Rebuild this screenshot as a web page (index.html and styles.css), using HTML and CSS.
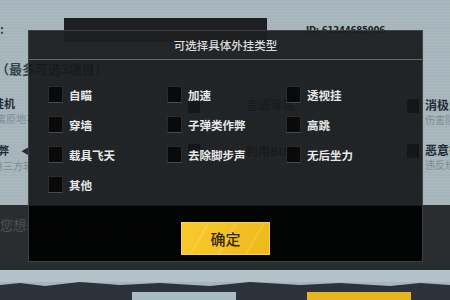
FILE: index.html
```html
<!DOCTYPE html>
<html lang="zh-CN">
  <head>
    <meta charset="UTF-8" />
    <meta name="viewport" content="width=device-width, initial-scale=1.0" />
    <title>举报</title>
    <link rel="stylesheet" href="styles.css">
  </head>
  <body>
    <div class="screen">
      <div class="report">
        <div class="report-head">
          <span class="colon">:</span>
          <div class="name-bar"></div>
          <span class="player-id">ID: 61244685906</span>
        </div>
        <div class="report-hint">（最多可选3项目）</div>
        <div class="reasons">
          <div class="reason-text">
            <div class="reason-name cut">消极挂机</div>
            <div class="reason-sub cut-sub">离原地不动</div>
          </div>
          <div class="reason">
            <span class="page-box"></span>
            <div class="reason-text">
              <div class="reason-name ghost">言语辱骂</div>
            </div>
          </div>
          <div class="reason">
            <span class="page-box"></span>
            <div class="reason-text">
              <div class="reason-name">消极比赛</div>
              <div class="reason-sub">伤害队友</div>
            </div>
          </div>
          <div class="reason-text row-2">
            <div class="reason-name cut-2">外挂作弊<span class="arrow">◀</span></div>
            <div class="reason-sub cut-sub-2">使用第三方软件</div>
          </div>
          <div class="reason row-2">
            <span class="page-box"></span>
            <div class="reason-text">
              <div class="reason-name ghost">利用BUG</div>
            </div>
          </div>
          <div class="reason">
            <span class="page-box"></span>
            <div class="reason-text">
              <div class="reason-name">恶意行为</div>
              <div class="reason-sub">违反规则</div>
            </div>
          </div>
        </div>
      </div>

      <div class="note">您想举报的详细情况（选填）</div>

      <div class="bottom">
        <div class="strip"></div>
        <div class="base">
          <span class="base-btn base-btn-grey"></span>
          <span class="base-btn base-btn-gold"></span>
        </div>
      </div>

      <div class="modal">
        <div class="modal-title">可选择具体外挂类型</div>
        <div class="modal-body">
          <label class="option"><span class="box"></span>自瞄</label>
          <label class="option"><span class="box"></span>加速</label>
          <label class="option"><span class="box"></span>透视挂</label>
          <label class="option"><span class="box"></span>穿墙</label>
          <label class="option"><span class="box"></span>子弹类作弊</label>
          <label class="option"><span class="box"></span>高跳</label>
          <label class="option"><span class="box"></span>载具飞天</label>
          <label class="option"><span class="box"></span>去除脚步声</label>
          <label class="option"><span class="box"></span>无后坐力</label>
          <label class="option"><span class="box"></span>其他</label>
        </div>
        <div class="modal-footer">
          <button class="confirm">确定</button>
        </div>
      </div>
    </div>
  </body>
</html>
```

FILE: styles.css
```css
body {
  margin: 0;
  padding: 0;
  font-family: "Noto Sans CJK SC", "Noto Sans", sans-serif;
  background-color: #a5b4ba;
}

.screen {
  position: relative;
  width: 450px;
  height: 300px;
  overflow: hidden;
  display: flex;
  flex-direction: column;
  background-color: #a6b5bb;
  background-image: repeating-linear-gradient(
    0deg,
    rgba(255, 255, 255, 0.05) 0 1px,
    transparent 1px 3px
  );
}

/* page behind the dialog */
.report {
  height: 205px;
  padding-top: 18px;
  box-sizing: border-box;
}

.report-head {
  display: flex;
  height: 24px;
}

.colon {
  width: 64px;
  font-size: 12px;
  line-height: 22px;
  color: #33414b;
  font-weight: bold;
}

.name-bar {
  width: 203px;
  background-color: #1c1e20;
}

.player-id {
  margin-left: 39px;
  margin-top: 6px;
  font-family: "DejaVu Sans Condensed", "DejaVu Sans", sans-serif;
  font-weight: bold;
  font-size: 9.5px;
  line-height: 11px;
  color: #1a2228;
  letter-spacing: -0.2px;
}

.report-hint {
  margin-top: 19px;
  margin-left: -4px;
  font-size: 13px;
  line-height: 15px;
  font-weight: bold;
  color: #34434d;
}

.reasons {
  margin-top: 21px;
  display: grid;
  grid-template-columns: 188px 219px 43px;
  grid-template-rows: 45px 45px;
}

.reason {
  display: flex;
  align-items: flex-start;
}

.reason-name {
  font-size: 12px;
  line-height: 13px;
  font-weight: bold;
  color: #1f2b33;
  white-space: nowrap;
}

.reason-name.cut {
  font-size: 11px;
  margin-left: -29px;
}

.reason-name.cut-2 {
  font-size: 11px;
  margin-left: -35px;
}

.reason-name.ghost {
  color: #3a464e;
}

.arrow {
  font-size: 8px;
  margin-left: 12px;
  vertical-align: 1px;
}

.reason-sub {
  margin-top: 3px;
  font-size: 10px;
  line-height: 11px;
  color: #7d8b92;
  white-space: nowrap;
}

.reason-sub.cut-sub {
  margin-left: -4px;
}

.reason-sub.cut-sub-2 {
  margin-left: -27px;
}

.reason-text.row-2 .reason-name,
.reason.row-2 .reason-name {
  margin-top: 2px;
}

.reason .reason-name {
  margin-top: 1px;
}

.page-box {
  flex: none;
  width: 12px;
  height: 14px;
  margin-top: 2px;
  margin-right: 6px;
  background-color: #0b0c0d;
}

.reason:nth-child(2) .page-box,
.reason:nth-child(5) .page-box {
  margin-right: 46px;
}

.note {
  height: 65px;
  box-sizing: border-box;
  padding: 10px 0 0 0;
  background-color: #2a2d30;
  font-size: 13px;
  color: #4d5357;
}

.bottom {
  flex: 1;
  display: flex;
  flex-direction: column;
}

.strip {
  height: 12px;
  background-color: #b3c2c8;
}

.base {
  flex: 1;
  display: flex;
  align-items: flex-end;
  gap: 71px;
  padding-left: 132px;
  background-color: #2b323a;
  clip-path: polygon(
    0 3px, 20px 1px, 45px 4px, 80px 0, 120px 3px, 160px 1px, 210px 4px,
    250px 0, 300px 3px, 340px 1px, 390px 4px, 420px 1px, 450px 3px,
    450px 100%, 0 100%
  );
}

.base-btn {
  width: 104px;
  height: 8px;
}

.base-btn-grey {
  background-color: #a8bbc3;
}

.base-btn-gold {
  background-color: #e7b51f;
}

/* dialog */
.modal {
  position: absolute;
  left: 28px;
  top: 30px;
  width: 395px;
  border: 1px solid #3d4144;
  box-sizing: border-box;
  background-color: rgba(22, 24, 26, 0.92);
}

.modal-title {
  height: 28px;
  line-height: 28px;
  text-align: center;
  font-size: 11.5px;
  font-weight: 500;
  color: #dadada;
  border-bottom: 1px solid #63686b;
  background-color: rgba(40, 42, 44, 0.35);
}

.modal-body {
  display: grid;
  grid-template-columns: 119px 119px 119px;
  row-gap: 13px;
  padding: 26px 0 13px 19px;
}

.option {
  display: flex;
  align-items: center;
  gap: 6px;
  height: 17px;
  font-size: 11.5px;
  font-weight: bold;
  color: #e8e8e8;
  white-space: nowrap;
}

.box {
  width: 15px;
  height: 17px;
  box-sizing: border-box;
  background-color: #0a0a0b;
  border: 1px solid #2c2c2d;
  border-bottom-color: #4a4a4a;
}

.modal-footer {
  height: 55px;
  box-sizing: border-box;
  padding-top: 16px;
  display: flex;
  justify-content: center;
  align-items: flex-start;
  background-color: rgba(0, 0, 0, 0.88);
}

.confirm {
  width: 89px;
  height: 33px;
  border: 1px solid #f5d25e;
  background-color: #f3bf22;
  background-image: repeating-linear-gradient(
      120deg,
      transparent 0 22px,
      rgba(255, 255, 255, 0.12) 22px 24px
    ),
    linear-gradient(110deg, #f9cb2e, #efb81b);
  font-family: "Noto Sans CJK SC", sans-serif;
  font-size: 15px;
  font-weight: 500;
  color: #35280a;
  padding: 0;
  cursor: pointer;
}
```
